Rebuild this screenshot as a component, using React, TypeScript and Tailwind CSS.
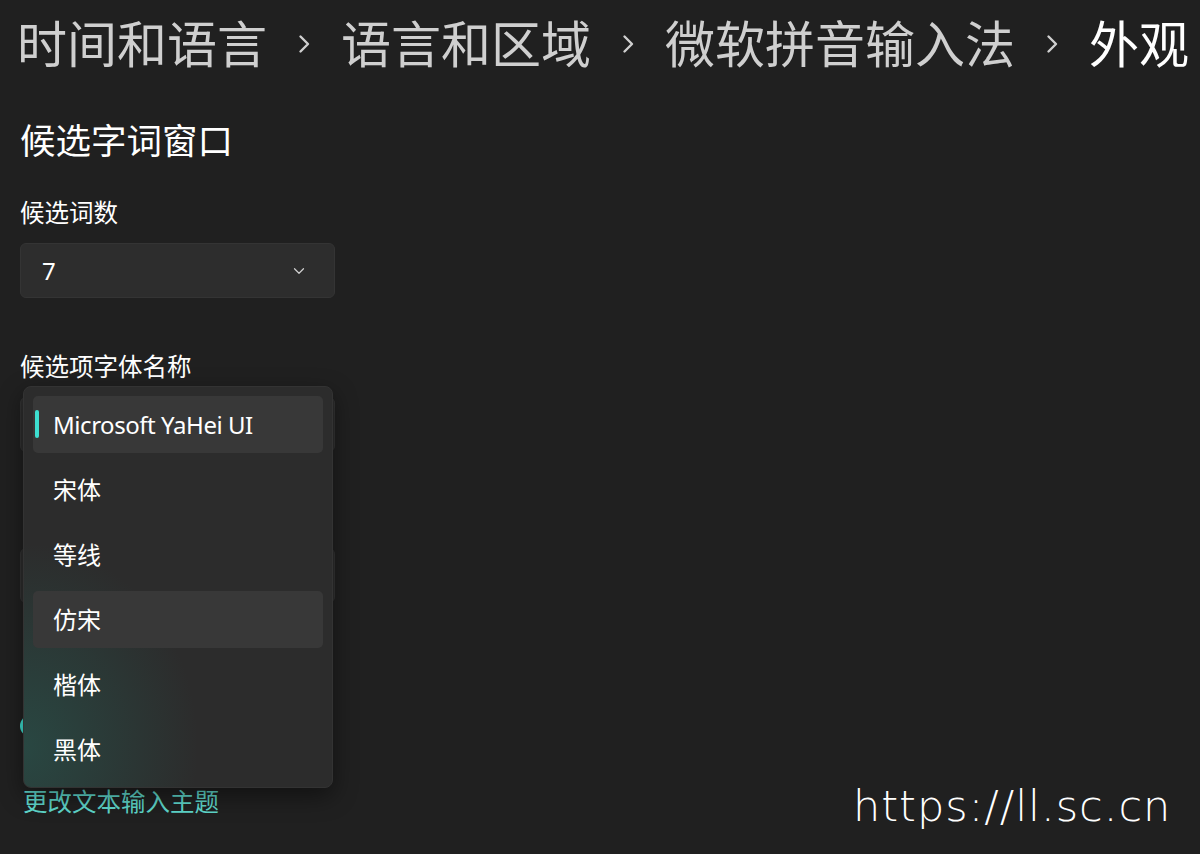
import { ChevronDown } from "lucide-react";

const cjk = "font-['Noto_Sans','Noto_Sans_CJK_SC',sans-serif]";

function Crumb({ text, active }: { text: string; active?: boolean }) {
  return (
    <span className={active ? "text-white" : "text-[#cfcfcf]"}>{text}</span>
  );
}

function Sep() {
  return (
    <span className="mx-[30px] flex w-[14px] items-center justify-center">
      <svg width="14" height="20" viewBox="0 0 14 20" fill="none">
        <path d="M3.5 2.5 L11 10 L3.5 17.5" stroke="#cfcfcf" strokeWidth="2.4" strokeLinecap="round" strokeLinejoin="round" />
      </svg>
    </span>
  );
}

export default function App() {
  const fonts = ["Microsoft YaHei UI", "宋体", "等线", "仿宋", "楷体", "黑体"];

  return (
    <div className={`relative h-[854px] w-[1200px] overflow-hidden bg-[#202020] ${cjk}`}>
      {/* breadcrumb */}
      <div className="flex h-[88px] items-center pl-[17px] text-[50px] leading-none whitespace-nowrap">
        <Crumb text="时间和语言" />
        <Sep />
        <Crumb text="语言和区域" />
        <Sep />
        <Crumb text="微软拼音输入法" />
        <Sep />
        <Crumb text="外观" active />
      </div>

      <div className="px-[20px]">
        <h2 className="mt-[28px] text-[35.5px] leading-[48px] font-normal text-white">候选字词窗口</h2>

        <div className="mt-[33px] text-[24.5px] leading-[32px] text-white">候选词数</div>
        <div className="mt-[14px] flex h-[55px] w-[315px] items-center justify-between rounded-[6px] border border-[#343434] bg-[#2d2d2d] pr-[26px] pl-[21px]">
          <span className="text-[24px] text-white">7</span>
          <ChevronDown className="h-[18px] w-[18px] text-[#d0d0d0]" strokeWidth={1.6} />
        </div>

        <div className="mt-[53px] text-[24.5px] leading-[32px] text-white">候选项字体名称</div>
        {/* controls hidden under the open list */}
        <div className="mt-[14px] h-[55px] w-[315px] rounded-[6px] border border-[#343434] bg-[#2d2d2d]" />
        <div className="mt-[47px] h-[32px]" />
        <div className="mt-[17px] h-[55px] w-[315px] rounded-[6px] border border-[#343434] bg-[#2d2d2d]" />
        <div className="mt-[61px] h-[32px]" />
        <div className="mt-[19px] flex h-[22px] w-[44px] items-center justify-end rounded-full bg-[#3ddfd0] pr-[4px]">
          <span className="h-[14px] w-[14px] rounded-full bg-[#202020]" />
        </div>

        <div className="mt-[49px] pl-[3px] text-[24.5px] leading-[32px] text-[#5fd8cc]">更改文本输入主题</div>
      </div>

      {/* open dropdown list */}
      <div className="absolute top-[386px] left-[23px] flex w-[310px] flex-col gap-[8px] overflow-hidden rounded-[8px] border border-[#333333] bg-[#2c2c2c] bg-[radial-gradient(ellipse_at_0%_90%,rgba(38,98,88,0.5),rgba(44,44,44,0)_40%)] px-[9px] py-[9px] shadow-[0_8px_24px_rgba(0,0,0,0.45)]">
        {fonts.map((f, i) => (
          <div
            key={f}
            className={`relative flex h-[57px] items-center rounded-[5px] pl-[20px] text-[24px] text-white ${
              i === 0 || i === 3 ? "bg-[#383838]" : ""
            } ${i === 0 ? "tracking-[-0.45px]" : ""}`}
          >
            {i === 0 && (
              <span className="absolute top-[14px] left-[2px] h-[28px] w-[4px] rounded-full bg-[#3ddfd0]" />
            )}
            {f}
          </div>
        ))}
      </div>

      {/* watermark */}
      <div className="absolute top-[776px] left-[853px] font-['DejaVu_Sans',sans-serif] text-[43px] leading-[60px] font-extralight tracking-[1px] text-white">
        https://ll.sc.cn
      </div>
    </div>
  );
}
